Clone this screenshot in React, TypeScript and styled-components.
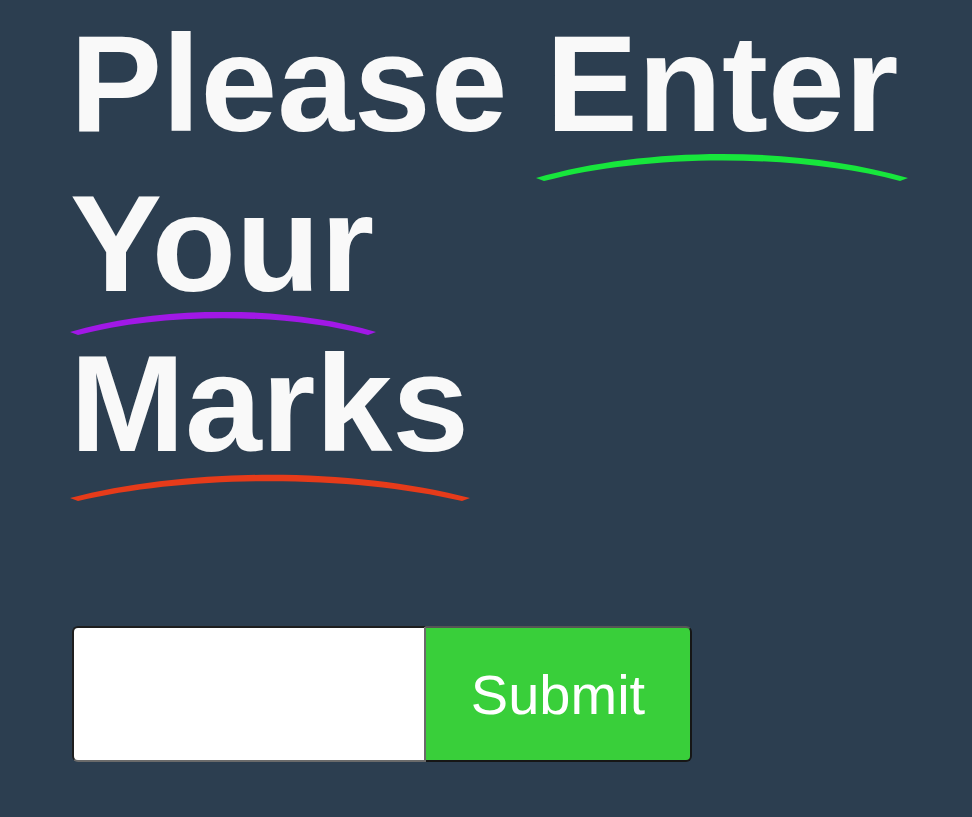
import React from "react";
import styled, { createGlobalStyle } from "styled-components";

const Global = createGlobalStyle`
  html, body { margin: 0; padding: 0; background: #2c3e50; }
  body { font-family: "Liberation Sans", Arial, sans-serif; }
`;

const Page = styled.main`
  min-height: 100vh;
  box-sizing: border-box;
  background: #2c3e50;
  padding: 3px 0 0 70px;
`;

const Heading = styled.h1`
  margin: 0;
  font-family: "Liberation Sans", Arial, sans-serif;
  font-weight: 700;
  font-size: 138px;
  line-height: 160px;
  color: #f9f9f9;
`;

const Mark = styled.span`
  position: relative;
`;

const Swoosh = styled.svg<{ $left: number; $top: number }>`
  position: absolute;
  left: ${(p) => p.$left}px;
  top: ${(p) => p.$top}px;
  overflow: hidden;
`;

const Form = styled.form`
  display: flex;
  margin: 143px 0 0 2px;
`;

const Field = styled.input`
  box-sizing: border-box;
  width: 354px;
  height: 136px;
  margin: 0;
  padding: 0 16px;
  background: #ffffff;
  border-style: solid;
  border-width: 2px;
  border-color: #1e1e1e #6a6a6a #6a6a6a #1e1e1e;
  border-radius: 6px 0 0 6px;
  font-family: "Liberation Sans", Arial, sans-serif;
  font-size: 40px;
  outline: none;
`;

const SubmitButton = styled.button`
  box-sizing: border-box;
  width: 266px;
  height: 136px;
  margin: 0;
  padding: 0;
  background: #39cf3a;
  color: #ffffff;
  border-style: solid;
  border-width: 2px 2px 2px 0;
  border-color: #555555 #161616 #161616 transparent;
  border-radius: 0 6px 6px 0;
  font-family: "Liberation Sans", Arial, sans-serif;
  font-size: 56px;
  cursor: pointer;
`;

type UnderlineProps = { color: string; width: number; height: number; left: number; top: number };

function Underline({ color, width: w, height: h, left, top }: UnderlineProps) {
  const d = `M 0 ${h - 3} C ${w * 0.3} -7, ${w * 0.7} -7, ${w} ${h - 3} L ${w - 8} ${h} C ${w * 0.7} 0.5, ${w * 0.3} 0.5, 8 ${h} Z`;
  return (
    <Swoosh $left={left} $top={top} width={w} height={h} viewBox={`0 0 ${w} ${h}`} aria-hidden="true">
      <path d={d} fill={color} />
    </Swoosh>
  );
}

export default function App() {
  return (
    <>
      <Global />
      <Page>
        <Heading>
          Please{" "}
          <Mark>
            Enter
            <Underline color="#17e63c" width={372} height={28} left={-10} top={147} />
          </Mark>
          <br />
          <Mark>
            Your
            <Underline color="#a118e6" width={306} height={23} left={0} top={146} />
          </Mark>
          <br />
          <Mark>
            Marks
            <Underline color="#e63b1a" width={400} height={27} left={0} top={148} />
          </Mark>
        </Heading>
        <Form onSubmit={(e) => e.preventDefault()}>
          <Field type="text" aria-label="Marks" />
          <SubmitButton type="submit">Submit</SubmitButton>
        </Form>
      </Page>
    </>
  );
}
